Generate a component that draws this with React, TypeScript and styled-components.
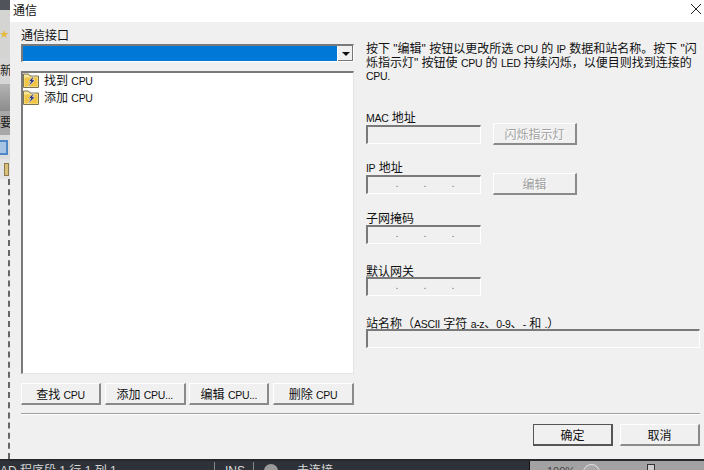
import styled, { createGlobalStyle } from "styled-components";

const GlobalStyle = createGlobalStyle`
  html, body {
    margin: 0;
    padding: 0;
    width: 704px;
    height: 470px;
    overflow: hidden;
    background: #2e3238;
  }
`;

const fontStack = `"Liberation Sans", "Noto Sans CJK SC", sans-serif`;

/* ─── ICONS ───────────────────────────────────────────────────────── */

function FolderBoltIcon() {
  return (
    <svg width="16" height="15" viewBox="0 0 16 15">
      <path d="M0.5 14.5 L0.5 1 L5.5 1 L7 3 L15.5 3 L15.5 14.5 Z" fill="#f8e79a" stroke="#7d7350" />
      <rect x="1.5" y="4.5" width="13" height="9" fill="#f0c444" />
      <path d="M11 2.5 L5.5 8.5 L8 8.5 L5 14 L12 7 L9.5 7 Z" fill="#2c3478" stroke="#f4f6fc" strokeWidth="0.5" />
    </svg>
  );
}

function CloseIcon() {
  return (
    <svg width="12" height="12" viewBox="0 0 12 12">
      <path d="M1 1 L11 11 M11 1 L1 11" stroke="#222" strokeWidth="1" fill="none" />
    </svg>
  );
}

function IpDots() {
  return (
    <>
      <IpDot>.</IpDot>
      <IpDot>.</IpDot>
      <IpDot>.</IpDot>
    </>
  );
}

/* ─── COMPONENT ───────────────────────────────────────────────────── */

export default function App() {
  return (
    <>
      <GlobalStyle />
      <Page>
        <MainRow>
          <BackWindow>
            <BackBand $height={10} $color="#50545a" />
            <BackBand $height={48} $color="#d4d4d2">
              <BackStar>★</BackStar>
            </BackBand>
            <BackBand $height={26} $color="#d6d6d6">
              <BackText>新</BackText>
            </BackBand>
            <BackBand $height={27} $color="linear-gradient(#b4b4b4, #8c8c8c)" />
            <BackBand $height={24} $color="#a8a8a8">
              <BackText>要</BackText>
            </BackBand>
            <BackBand $height={24} $color="#dcdcdc">
              <BackBlue />
            </BackBand>
            <BackBand $height={20} $color="#e4e4e4">
              <BackYellow />
            </BackBand>
            <BackBand $height={280} $color="#efefef" $dashed />
          </BackWindow>
          <Dialog>
            <TitleBar>
              <TitleText>通信</TitleText>
              <CloseIcon />
            </TitleBar>
            <DialogBody>
              <Columns>
                <LeftColumn>
                  <ComboLabel>通信接口</ComboLabel>
                  <ComboBox>
                    <ComboValue />
                    <ComboArrow />
                  </ComboBox>
                  <TreeList>
                    <TreeRow>
                      <FolderBoltIcon />
                      <TreeText>找到 <Lat>CPU</Lat></TreeText>
                    </TreeRow>
                    <TreeRow>
                      <FolderBoltIcon />
                      <TreeText>添加 <Lat>CPU</Lat></TreeText>
                    </TreeRow>
                  </TreeList>
                  <CpuButtons>
                    <WinButton $width={80}><span>查找 <Lat>CPU</Lat></span></WinButton>
                    <WinButton $width={81}><span>添加 <Lat>CPU...</Lat></span></WinButton>
                    <WinButton $width={80}><span>编辑 <Lat>CPU...</Lat></span></WinButton>
                    <WinButton $width={81}><span>删除 <Lat>CPU</Lat></span></WinButton>
                  </CpuButtons>
                </LeftColumn>
                <RightColumn>
                  <HelpText>
                    按下 "编辑" 按钮以更改所选 <Lat>CPU</Lat> 的 <Lat>IP</Lat> 数据和站名称。按下 "闪
                    <br />
                    烁指示灯" 按钮使 <Lat>CPU</Lat> 的 <Lat>LED</Lat> 持续闪烁，以便目则找到连接的
                    <br />
                    <Lat>CPU.</Lat>
                  </HelpText>
                  <FieldGroup $top={25}>
                    <FieldLabel><Lat>MAC</Lat> 地址</FieldLabel>
                    <InputRow>
                      <SunkenInput $width={115} />
                      <WinButton $width={84} $disabled>闪烁指示灯</WinButton>
                    </InputRow>
                  </FieldGroup>
                  <FieldGroup $top={14}>
                    <FieldLabel><Lat>IP</Lat> 地址</FieldLabel>
                    <InputRow>
                      <SunkenInput $width={115}><IpDots /></SunkenInput>
                      <WinButton $width={84} $disabled>编辑</WinButton>
                    </InputRow>
                  </FieldGroup>
                  <FieldGroup $top={15} $gap={1}>
                    <FieldLabel>子网掩码</FieldLabel>
                    <SunkenInput $width={115}><IpDots /></SunkenInput>
                  </FieldGroup>
                  <FieldGroup $top={19}>
                    <FieldLabel>默认网关</FieldLabel>
                    <SunkenInput $width={115}><IpDots /></SunkenInput>
                  </FieldGroup>
                  <FieldGroup $top={19}>
                    <FieldLabel>站名称（<Lat>ASCII</Lat> 字符 <Lat>a-z</Lat>、<Lat>0-9</Lat>、<Lat>-</Lat> 和 <Lat>.</Lat>）</FieldLabel>
                    <SunkenInput $width={334} />
                  </FieldGroup>
                </RightColumn>
              </Columns>
              <Separator />
              <DialogActions>
                <WinButton $width={80} $primary>确定</WinButton>
                <WinButton $width={80}>取消</WinButton>
              </DialogActions>
            </DialogBody>
          </Dialog>
        </MainRow>
        <StatusBar>
          <StatusDark>
            <StatusText $width={214}>AD 程序段 1 行 1 列 1</StatusText>
            <StatusDivider />
            <StatusText $width={28}>INS</StatusText>
            <StatusDivider />
            <StatusDot />
            <StatusText $width={60}>未连接</StatusText>
          </StatusDark>
          <ZoomPanel>
            <ZoomText>100%</ZoomText>
            <ZoomKnob />
            <ZoomThumb />
          </ZoomPanel>
        </StatusBar>
      </Page>
    </>
  );
}

/* ─── STYLED COMPONENTS ───────────────────────────────────────────── */

const Page = styled.div`
  width: 704px;
  height: 470px;
  display: flex;
  flex-direction: column;
  overflow: hidden;
  font-family: ${fontStack};
  font-size: 12px;
  color: #111;
`;

/* Latin runs in the dialog are set smaller than the CJK around them */
const Lat = styled.span`
  font-size: 10.5px;
  letter-spacing: -0.3px;
`;

const MainRow = styled.div`
  height: 459px;
  display: flex;
  flex-shrink: 0;
`;

const BackWindow = styled.div`
  width: 10px;
  flex-shrink: 0;
  overflow: hidden;
`;

const BackBand = styled.div<{ $height: number; $color: string; $dashed?: boolean }>`
  height: ${(p) => p.$height}px;
  background: ${(p) => p.$color};
  box-sizing: border-box;
  display: flex;
  align-items: center;
  overflow: hidden;
  border-right: ${(p) => (p.$dashed ? "2px dashed #666" : "none")};
`;

const BackStar = styled.span`
  font-size: 9px;
  line-height: 1;
  color: #e8b93a;
`;

const BackText = styled.span`
  font-size: 12px;
  line-height: 1;
  color: #222;
`;

const BackBlue = styled.div`
  width: 8px;
  height: 15px;
  box-sizing: border-box;
  background: #a8c4e4;
  border: 2px solid #4f86c6;
  border-left: none;
`;

const BackYellow = styled.div`
  width: 5px;
  height: 13px;
  margin-left: 4px;
  background: #d9bf7a;
  border: 1px solid #8b7a4a;
  box-sizing: border-box;
`;

const Dialog = styled.div`
  flex: 1;
  display: flex;
  flex-direction: column;
  background: #f0f0f0;
`;

const TitleBar = styled.div`
  height: 22px;
  flex-shrink: 0;
  background: #fff;
  display: flex;
  align-items: center;
  justify-content: space-between;
  padding: 0 3px 4px 3px;
  box-sizing: border-box;
`;

const TitleText = styled.span`
  font-size: 12px;
`;

const DialogBody = styled.div`
  flex: 1;
  display: flex;
  flex-direction: column;
  padding: 5px 5px 0 11px;
`;

const Columns = styled.div`
  display: flex;
  gap: 12px;
`;

const LeftColumn = styled.div`
  width: 333px;
  flex-shrink: 0;
  display: flex;
  flex-direction: column;
`;

const RightColumn = styled.div`
  flex: 1;
  display: flex;
  flex-direction: column;
  padding-top: 16px;
`;

const FieldLabel = styled.div`
  height: 14px;
  line-height: 18px;
  font-size: 12px;
  white-space: nowrap;
`;

const ComboLabel = styled(FieldLabel)`
  line-height: 19px;
  margin-bottom: 3px;
`;

const ComboBox = styled.div`
  height: 18px;
  display: flex;
  box-sizing: border-box;
  border-top: 2px solid #7a7a7a;
  border-left: 2px solid #7a7a7a;
  border-right: 1px solid #fff;
  border-bottom: 1px solid #fff;
  background: #fff;
`;

const ComboValue = styled.div`
  flex: 1;
  background: #0078d7;
`;

const ComboArrow = styled.div`
  width: 15px;
  position: relative;
  background: #f0f0f0;
  border-left: 1px solid #fff;
  box-shadow: inset -1px -1px 0 #777;

  &::after {
    content: "";
    position: absolute;
    left: 4px;
    top: 6px;
    border-left: 4px solid transparent;
    border-right: 4px solid transparent;
    border-top: 4px solid #111;
  }
`;

const TreeList = styled.div`
  height: 303px;
  margin-top: 9px;
  box-sizing: border-box;
  background: #fff;
  border-top: 2px solid #7a7a7a;
  border-left: 2px solid #7a7a7a;
  border-right: 1px solid #e4e4e4;
  border-bottom: 1px solid #e4e4e4;
`;

const TreeRow = styled.div`
  height: 17px;
  display: flex;
  align-items: flex-start;
  gap: 5px;
  white-space: nowrap;
`;

const TreeText = styled.span`
  font-size: 12px;
  line-height: 16px;
`;

const CpuButtons = styled.div`
  display: flex;
  justify-content: space-between;
  margin-top: 9px;
`;

const WinButton = styled.div<{ $width: number; $disabled?: boolean; $primary?: boolean }>`
  width: ${(p) => p.$width}px;
  height: 22px;
  flex-shrink: 0;
  box-sizing: border-box;
  display: flex;
  align-items: center;
  justify-content: center;
  background: #f0f0f0;
  font-size: 12px;
  white-space: nowrap;
  color: ${(p) => (p.$disabled ? "#a0a0a0" : "#111")};
  text-shadow: ${(p) => (p.$disabled ? "1px 1px 0 #fff" : "none")};
  border-top: 1px solid ${(p) => (p.$primary ? "#555" : "#fff")};
  border-left: 1px solid ${(p) => (p.$primary ? "#555" : "#fff")};
  border-right: 2px solid ${(p) => (p.$primary ? "#555" : "#8a8a8a")};
  border-bottom: 2px solid ${(p) => (p.$primary ? "#555" : "#8a8a8a")};
`;

const HelpText = styled.p`
  margin: 0;
  height: 41px;
  font-size: 12px;
  line-height: 13.5px;
  white-space: nowrap;
`;

const FieldGroup = styled.div<{ $top: number; $gap?: number }>`
  margin-top: ${(p) => p.$top}px;
  display: flex;
  flex-direction: column;
  gap: ${(p) => p.$gap ?? 0}px;
`;

const InputRow = styled.div`
  display: flex;
  align-items: center;
  gap: 12px;
`;

const SunkenInput = styled.div<{ $width: number }>`
  width: ${(p) => p.$width}px;
  height: 19px;
  box-sizing: border-box;
  display: flex;
  justify-content: center;
  gap: 25px;
  padding-left: 2px;
  background: #f0f0f0;
  border-top: 2px solid #7a7a7a;
  border-left: 2px solid #7a7a7a;
  border-right: 1px solid #fff;
  border-bottom: 1px solid #fff;
`;

const IpDot = styled.span`
  font-size: 11px;
  line-height: 13px;
  color: #777;
`;

const Separator = styled.div`
  height: 2px;
  margin-top: 8px;
  background: linear-gradient(#a0a0a0 50%, #fff 50%);
`;

const DialogActions = styled.div`
  display: flex;
  justify-content: flex-end;
  gap: 7px;
  margin-top: 9px;
`;

const StatusBar = styled.div`
  height: 11px;
  flex-shrink: 0;
  display: flex;
  overflow: hidden;
  border-top: 2px solid #26282c;
  box-sizing: border-box;
`;

const StatusDark = styled.div`
  width: 530px;
  display: flex;
  align-items: flex-start;
  box-sizing: border-box;
  background: #2e3238;
  border-right: 1px solid #111;
`;

const StatusText = styled.div<{ $width: number }>`
  width: ${(p) => p.$width}px;
  flex-shrink: 0;
  font-size: 12px;
  line-height: 14px;
  margin-top: 3px;
  color: #d8d8d8;
  white-space: nowrap;
`;

const StatusDivider = styled.div`
  width: 1px;
  height: 9px;
  margin: 1px 10px 0 0;
  background: #888;
`;

const StatusDot = styled.div`
  width: 14px;
  height: 14px;
  margin: 3px 19px 0 0;
  border-radius: 50%;
  background: #9a9a9a;
`;

const ZoomPanel = styled.div`
  flex: 1;
  display: flex;
  align-items: flex-start;
  padding-left: 17px;
  background: #a2a2a2;
`;

const ZoomText = styled.span`
  font-size: 11px;
  line-height: 14px;
  margin-top: 3px;
  color: #444;
  width: 36px;
`;

const ZoomKnob = styled.div`
  width: 17px;
  height: 17px;
  margin-top: 3px;
  border-radius: 50%;
  background: #a8a8a8;
  border: 1px solid #e4e4e4;
  box-sizing: border-box;
`;

const ZoomThumb = styled.div`
  width: 8px;
  height: 8px;
  margin: 3px 0 0 47px;
  box-sizing: border-box;
  background: #ccc;
  border: 1px solid #333;
`;
